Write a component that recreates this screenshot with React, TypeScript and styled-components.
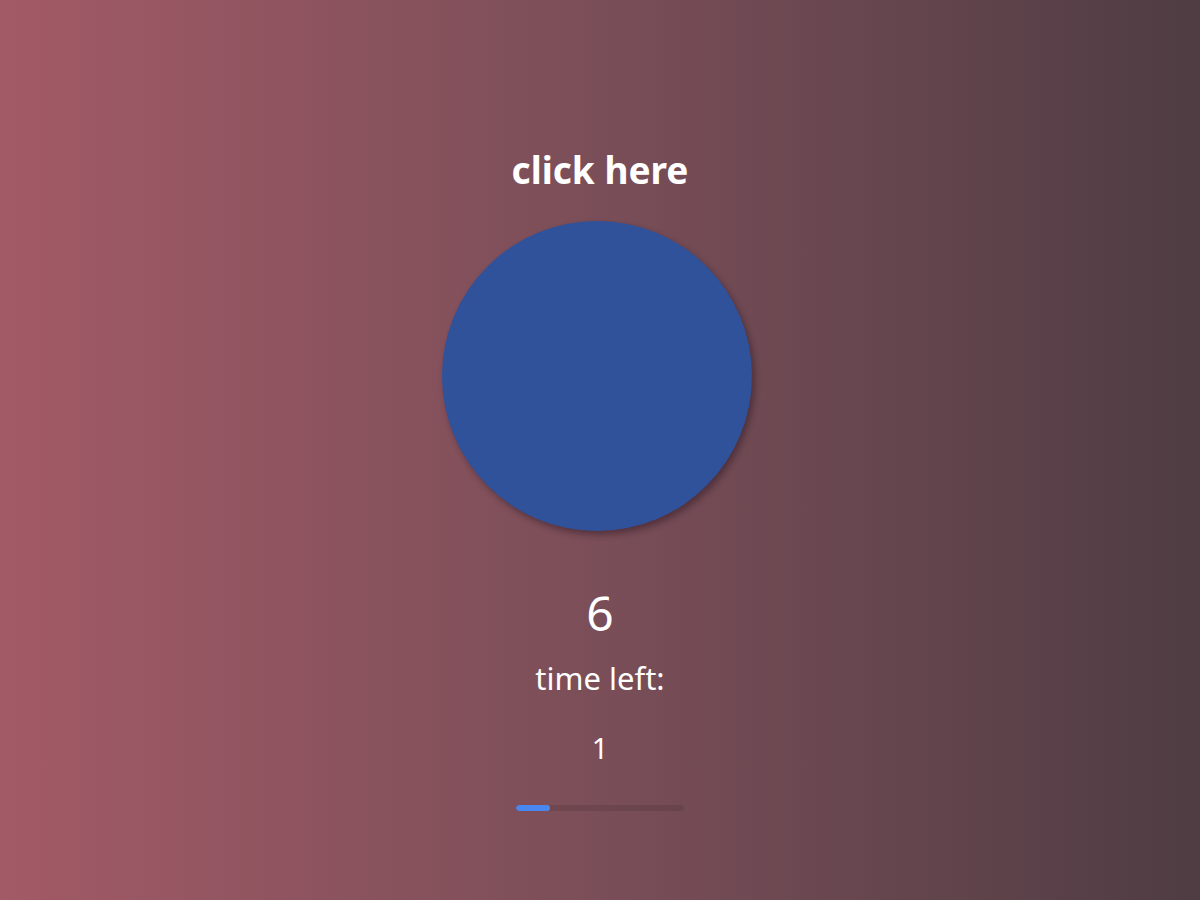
import React from 'react';
import styled, { createGlobalStyle } from 'styled-components';

const GlobalStyle = createGlobalStyle`
  html, body {
    margin: 0;
    padding: 0;
    height: 100%;
  }
  body {
    font-family: 'Noto Sans', 'Open Sans', sans-serif;
    color: #fff;
  }
`;

const Page = styled.div`
  width: 100%;
  min-height: 100vh;
  background: linear-gradient(90deg, #a25a66 0%, #7a4e58 50%, #4f3c43 100%);
  display: flex;
  flex-direction: column;
  align-items: center;
  padding-top: 143px;
  box-sizing: border-box;
`;

const Title = styled.h1`
  margin: 0;
  font-size: 37px;
  font-weight: 700;
  line-height: 54px;
`;

const Target = styled.button`
  margin: 24px 6px 0 0;
  width: 310px;
  height: 310px;
  border: none;
  border-radius: 50%;
  background: #2f529b;
  box-shadow: 3px 4px 6px rgba(40, 20, 30, 0.45);
  cursor: pointer;
`;

const Score = styled.div`
  margin-top: 50px;
  font-size: 48px;
  line-height: 64px;
  font-weight: 400;
`;

const Label = styled.div`
  margin-top: 12px;
  font-size: 31px;
  line-height: 42px;
`;

const Seconds = styled.div`
  margin-top: 28px;
  font-size: 29px;
  line-height: 42px;
`;

const Track = styled.div`
  margin-top: 36px;
  width: 168px;
  height: 6px;
  border-radius: 3px;
  background: rgba(0, 0, 0, 0.1);
  overflow: hidden;
`;

const Fill = styled.div`
  height: 100%;
  border-radius: 3px;
  background: #4a86f0;
`;

export default function App() {
  const score = 6;
  const left = 1;
  const total = 5;
  return (
    <>
      <GlobalStyle />
      <Page>
        <Title>click here</Title>
        <Target aria-label="click target" />
        <Score>{score}</Score>
        <Label>time left:</Label>
        <Seconds>{left}</Seconds>
        <Track>
          <Fill style={{ width: `${(left / total) * 100}%` }} />
        </Track>
      </Page>
    </>
  );
}
